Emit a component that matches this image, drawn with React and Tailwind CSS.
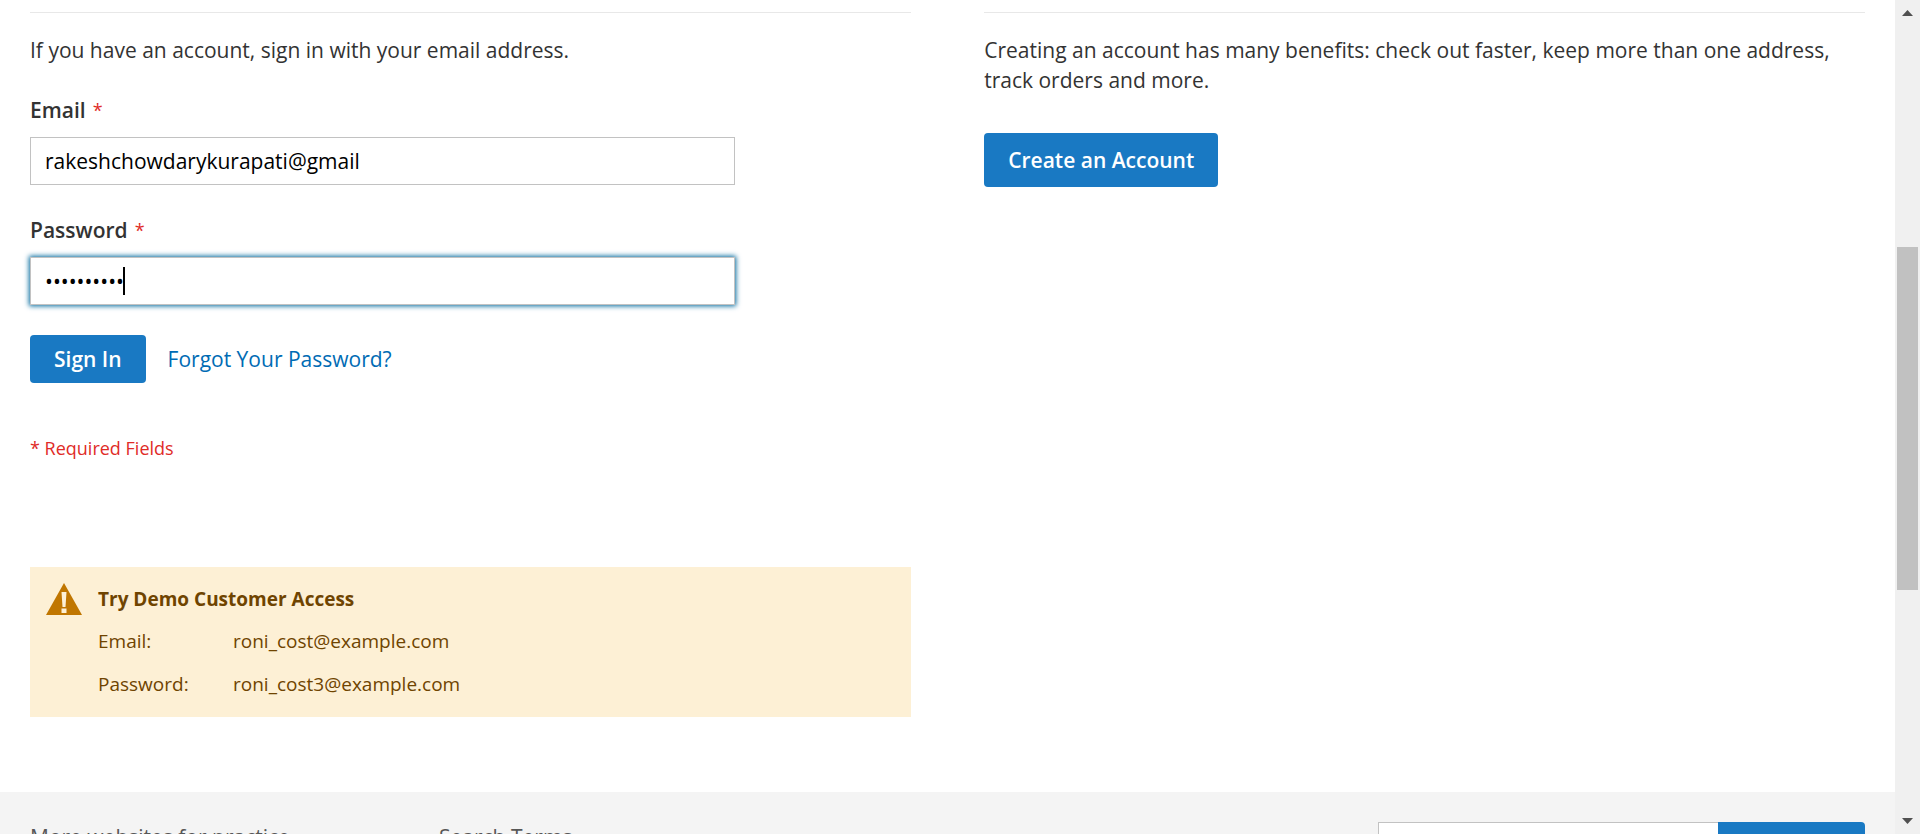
import { useState } from "react";

function Field({ id, label, children }) {
  return (
    <div className="flex flex-col gap-3">
      <label htmlFor={id} className="flex items-center gap-[7px] font-semibold leading-[30px]">
        {label}
        <span className="text-[18px] font-normal text-[#e02b27]">*</span>
      </label>
      <div className="relative w-4/5">{children}</div>
    </div>
  );
}

function SignIn() {
  const [email, setEmail] = useState("rakeshchowdarykurapati@gmail");
  const [password, setPassword] = useState("roni_cost3");
  return (
    <section className="border-t border-[#e8e8e8] pt-[22px]">
      <form onSubmit={(e) => e.preventDefault()}>
        <p className="leading-[30px]">If you have an account, sign in with your email address.</p>
        <div className="mt-[30px] flex flex-col gap-[30px]">
          <Field id="email" label="Email">
            <input
              id="email"
              type="email"
              value={email}
              onChange={(e) => setEmail(e.target.value)}
              className="block h-12 w-full border border-[#c2c2c2] bg-white px-3.5 text-black outline-none"
            />
          </Field>
          <Field id="password" label="Password">
            <input
              id="password"
              type="password"
              value={password}
              onChange={(e) => setPassword(e.target.value)}
              className="block h-12 w-full border border-[#c2c2c2] bg-white px-3.5 text-black caret-transparent shadow-[0_0_5px_1px_#00699d] outline-none"
            />
            <span aria-hidden="true" className="absolute top-2.5 left-[93px] h-7 w-0.5 bg-black" />
          </Field>
        </div>
        <div className="mt-[30px] flex items-center gap-[22px]">
          <button type="submit" className="h-12 rounded-[4px] bg-[#1979c3] px-6 pt-0.5 font-semibold text-white">
            Sign In
          </button>
          <a href="#forgot" className="pt-0.5 text-[#006bb4]">Forgot Your Password?</a>
        </div>
        <p className="mt-[52px] text-[18px] leading-[26px] text-[#e02b27]">* Required Fields</p>
      </form>
    </section>
  );
}

function NewCustomer() {
  return (
    <section className="border-t border-[#e8e8e8] pt-[22px]">
      <p className="leading-[30px]">
        Creating an account has many benefits: check out faster, keep more than one address, track orders and more.
      </p>
      <a
        href="#create"
        className="mt-[38px] inline-flex h-[54px] items-center rounded-[4px] bg-[#1979c3] px-6 pt-0.5 font-semibold text-white"
      >
        Create an Account
      </a>
    </section>
  );
}

function DemoNotice() {
  return (
    <section className="mt-[106px] flex w-[48%] gap-4 bg-[#fdf0d5] px-4 pt-4 pb-[18px] text-[19px] leading-[30px] text-[#6f4400]">
      <svg viewBox="0 0 36 32" className="h-8 w-9 shrink-0" aria-hidden="true">
        <path d="M18 0 36 32H0Z" fill="#c07600" />
        <path d="M15.5 9h5l-1 15h-3ZM15.5 25.5h5V30h-5Z" fill="#fdf0d5" />
      </svg>
      <div className="pt-px">
        <h2 className="font-bold">Try Demo Customer Access</h2>
        <dl className="mt-3 grid grid-cols-[135px_auto] gap-y-[13px]">
          <dt>Email:</dt>
          <dd>roni_cost@example.com</dd>
          <dt>Password:</dt>
          <dd>roni_cost3@example.com</dd>
        </dl>
      </div>
    </section>
  );
}

function Footer() {
  return (
    <footer className="mt-[75px] flex items-start justify-between bg-[#f4f4f4] px-[30px] pt-[30px] text-[#575757]">
      <ul className="flex leading-[30px]">
        <li className="w-[409px]"><a href="#practice">More websites for practice</a></li>
        <li><a href="#terms">Search Terms</a></li>
      </ul>
      <form className="flex" onSubmit={(e) => e.preventDefault()}>
        <input
          type="email"
          aria-label="Newsletter email"
          className="h-12 w-[340px] border border-r-0 border-[#c2c2c2] bg-white px-3.5 outline-none"
        />
        <button type="submit" aria-label="Subscribe" className="h-12 w-[147px] rounded-r-[4px] bg-[#1979c3]" />
      </form>
    </footer>
  );
}

function ScrollRail() {
  return (
    <div aria-hidden="true" className="flex w-[25px] shrink-0 flex-col items-center bg-[#f0f0f0] py-2.5">
      <svg viewBox="0 0 11 6" className="h-1.5 w-[11px]">
        <path d="M5.5 0 11 6H0Z" fill="#505050" />
      </svg>
      <div className="flex w-full grow flex-col items-center">
        <div className="h-[231px]" />
        <div className="h-[343px] w-[21px] bg-[#c1c1c1]" />
      </div>
      <svg viewBox="0 0 11 6" className="h-1.5 w-[11px]">
        <path d="M0 0H11L5.5 6Z" fill="#505050" />
      </svg>
    </div>
  );
}

export default function App() {
  return (
    <div className="flex h-screen overflow-hidden bg-white font-['Open_Sans',sans-serif] text-[21px] text-[#333333]">
      <div className="min-w-0 grow overflow-hidden">
        <main className="px-[30px] pt-3">
          <div className="grid grid-cols-[48%_48%] justify-between">
            <SignIn />
            <NewCustomer />
          </div>
          <DemoNotice />
        </main>
        <Footer />
      </div>
      <ScrollRail />
    </div>
  );
}
